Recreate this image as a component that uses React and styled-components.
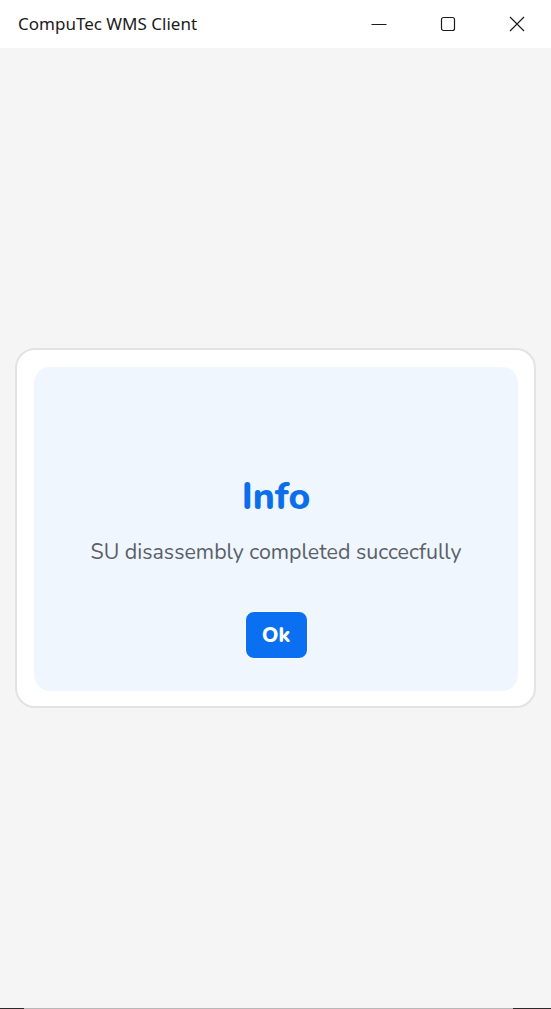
import React from 'react';
import styled, { createGlobalStyle } from 'styled-components';

const GlobalStyle = createGlobalStyle`
  html, body {
    margin: 0;
    padding: 0;
    background: #f4f5f4;
  }
  #root {
    height: 1009px;
  }
`;

const Window = styled.div`
  display: flex;
  flex-direction: column;
  height: 1009px;
  width: 551px;
  background: #f4f5f4;
  font-family: 'Nunito', 'Open Sans', sans-serif;
`;

const TitleBar = styled.div`
  height: 48px;
  flex: none;
  display: flex;
  align-items: center;
  background: #ffffff;
`;

const Title = styled.div`
  flex: 1;
  padding-left: 18px;
  padding-bottom: 1px;
  font-family: 'Noto Sans', 'Open Sans', sans-serif;
  font-size: 17px;
  color: #1b1b1b;
`;

const WinButton = styled.div`
  width: 69px;
  height: 48px;
  display: flex;
  align-items: center;
  justify-content: center;
  margin-left: ${p => p.shift || 0}px;
`;

const Body = styled.div`
  flex: 1;
  display: flex;
  align-items: center;
  justify-content: center;
  padding: 0 15px;
`;

const BottomEdge = styled.div`
  height: 1px;
  flex: none;
  display: flex;
`;

const EdgePart = styled.div`
  width: ${p => p.w}px;
  flex: ${p => (p.w ? 'none' : 1)};
  background: ${p => p.c};
`;

const Card = styled.div`
  width: 100%;
  box-sizing: border-box;
  background: #ffffff;
  border: 2px solid #e2e3e3;
  border-radius: 20px;
  padding: 17px 16px 15px 17px;
`;

const Panel = styled.div`
  background: #eff6fe;
  border-radius: 16px;
  height: 324px;
  box-sizing: border-box;
  padding-top: 106px;
  display: flex;
  flex-direction: column;
  align-items: center;
`;

const Heading = styled.h1`
  margin: 0;
  font-weight: 800;
  font-size: 37px;
  line-height: 48px;
  color: #0a6fe9;
`;

const Message = styled.p`
  margin: 17px 0 0;
  font-size: 21.4px;
  line-height: 28px;
  color: #5b5f69;
`;

const OkButton = styled.button`
  margin-top: 45px;
  width: 63px;
  height: 48px;
  flex: none;
  box-sizing: border-box;
  border: 1px solid #ffffff;
  border-radius: 9px;
  background: #0a6ff0;
  color: #ffffff;
  font-family: inherit;
  font-weight: 800;
  font-size: 21px;
  cursor: pointer;
`;

export default function App() {
  return (
    <>
      <GlobalStyle />
      <Window>
        <TitleBar>
          <Title>CompuTec WMS Client</Title>
          <WinButton shift={-2}>
            <svg width="16" height="16" viewBox="0 0 16 16">
              <path d="M0.5 8.5h15" stroke="#1b1b1b" strokeWidth="1" />
            </svg>
          </WinButton>
          <WinButton>
            <svg width="16" height="16" viewBox="0 0 16 16">
              <rect x="1.5" y="1.5" width="13" height="13" rx="2" fill="none" stroke="#1b1b1b" strokeWidth="1.2" />
            </svg>
          </WinButton>
          <WinButton>
            <svg width="16" height="16" viewBox="0 0 16 16">
              <path d="M1 1L15 15M15 1L1 15" stroke="#1b1b1b" strokeWidth="1.2" />
            </svg>
          </WinButton>
        </TitleBar>
        <Body>
          <Card>
            <Panel>
              <Heading>Info</Heading>
              <Message>SU disassembly completed succecfully</Message>
              <OkButton>Ok</OkButton>
            </Panel>
          </Card>
        </Body>
        <BottomEdge>
          <EdgePart w={24} c="#2a2a2a" />
          <EdgePart c="#b8b8b8" />
          <EdgePart w={38} c="#2a2a2a" />
        </BottomEdge>
      </Window>
    </>
  );
}
